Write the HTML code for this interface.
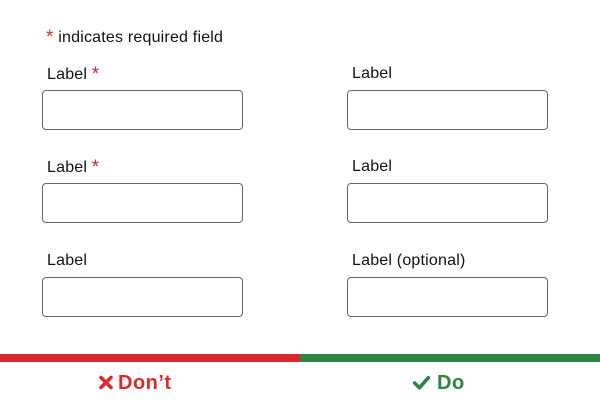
<!DOCTYPE html>
<html><head><style>
body{margin:0;width:600px;height:412px;background:#fff;font-family:"Liberation Sans",sans-serif;position:relative;overflow:hidden;color:#111}
.t{position:absolute;font-size:16px;line-height:18px;white-space:nowrap;letter-spacing:0.2px}
.r{color:#d9292e;font-size:19px;position:relative;top:1px}
.b{position:absolute;width:199px;height:38px;border:1px solid #666;border-radius:4px;box-sizing:content-box}
</style></head><body>
<div class="t" style="left:46px;top:28px"><span class="r">*</span> indicates required field</div>
<div class="t" style="left:47px;top:65px">Label <span class="r">*</span></div>
<div class="b" style="left:42px;top:90px"></div>
<div class="t" style="left:47px;top:158px">Label <span class="r">*</span></div>
<div class="b" style="left:42px;top:183px"></div>
<div class="t" style="left:47px;top:252px">Label</div>
<div class="b" style="left:42px;top:277px"></div>
<div class="t" style="left:352px;top:65px">Label</div>
<div class="b" style="left:347px;top:90px"></div>
<div class="t" style="left:352px;top:158px">Label</div>
<div class="b" style="left:347px;top:183px"></div>
<div class="t" style="left:352px;top:252px">Label (optional)</div>
<div class="b" style="left:347px;top:277px"></div>
<div style="position:absolute;left:0;top:354px;width:300px;height:8px;background:#d9292e"></div>
<div style="position:absolute;left:300px;top:354px;width:300px;height:8px;background:#2e8540"></div>
<div style="position:absolute;left:98px;top:373px;font-size:20px;font-weight:bold;color:#d9292e;line-height:20px;letter-spacing:0.5px">
<svg width="16" height="17" viewBox="0 0 16 16" style="vertical-align:-2px;margin-right:4px"><path d="M3 3L13 13M13 3L3 13" stroke="#d9292e" stroke-width="3.6" stroke-linecap="round"/></svg>Don’t</div>
<div style="position:absolute;left:412px;top:373px;font-size:20px;font-weight:bold;color:#2e8540;line-height:20px;letter-spacing:0.5px">
<svg width="19" height="17" viewBox="0 0 18 16" style="vertical-align:-2px;margin-right:6px"><path d="M2.5 8.5L7 13L15.5 3.5" stroke="#2e8540" stroke-width="3.4" fill="none" stroke-linecap="round" stroke-linejoin="round"/></svg>Do</div>
</body></html>
